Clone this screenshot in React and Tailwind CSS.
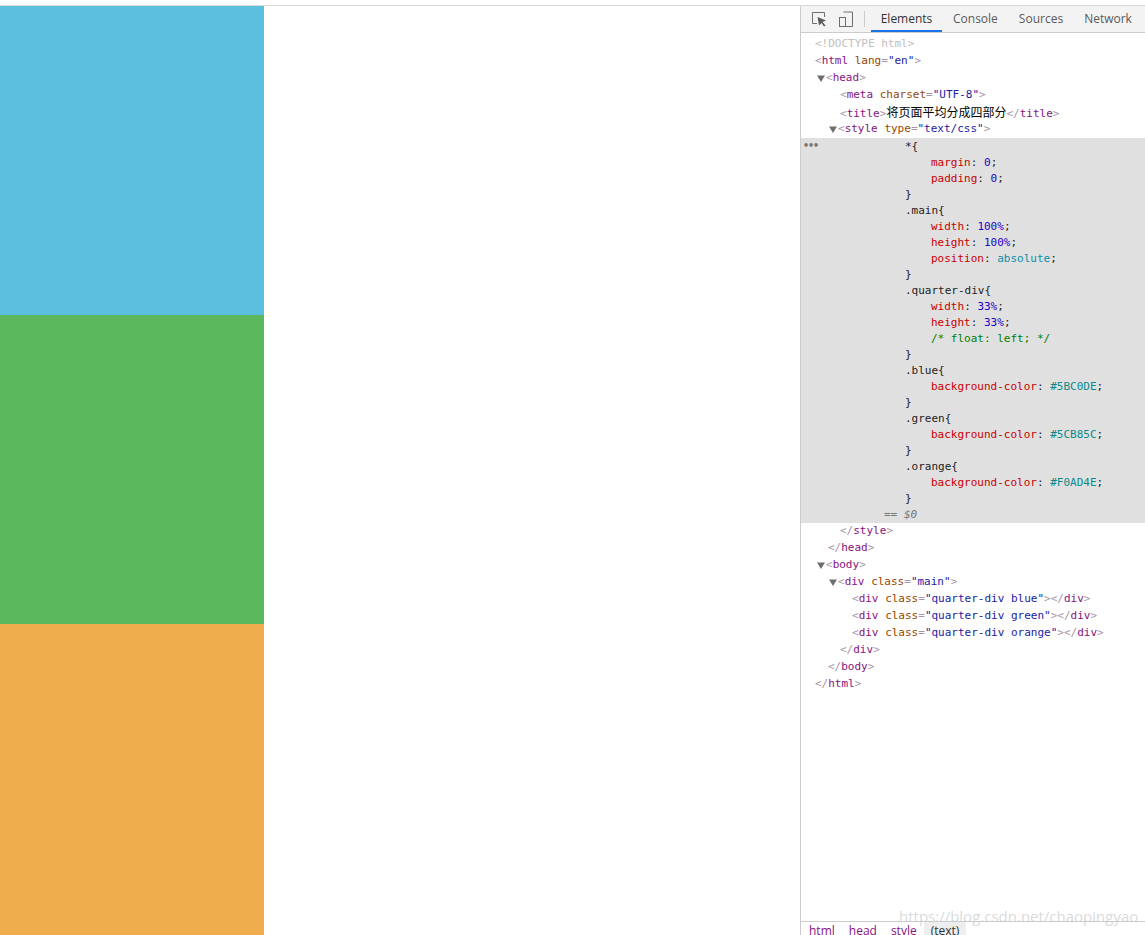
import React from 'react';

const TAG = 'text-[#881280]';
const BR = 'text-[#a894a6]';
const ATTR = 'text-[#994500]';
const VAL = 'text-[#1a1aa6]';

const Tag = ({ children }) => <span className={TAG}>{children}</span>;
const Br = ({ children }) => <span className={BR}>{children}</span>;
const Attr = ({ children }) => <span className={ATTR}>{children}</span>;
const Val = ({ children }) => <span className={VAL}>{children}</span>;

const Arrow = () => (
    <svg width="8" height="7" viewBox="0 0 8 7" className="shrink-0 mr-[1px]">
        <path d="M0 0.5 H8 L4 7 Z" fill="#6e6e6e" />
    </svg>
);

const TreeRow = ({ indent, arrow, children }) => (
    <div className="flex items-center h-[17px] whitespace-pre" style={{ paddingLeft: indent }}>
        {arrow && <Arrow />}
        <span>{children}</span>
    </div>
);

const DivRow = ({ name }) => (
    <TreeRow indent={51}>
        <Br>&lt;</Br><Tag>div</Tag> <Attr>class</Attr><Br>=</Br><Val>"quarter-div {name}"</Val><Br>&gt;&lt;/</Br><Tag>div</Tag><Br>&gt;</Br>
    </TreeRow>
);

const cssLines = [
    { t: '*{', x: 104 },
    { p: 'margin', v: '0', c: 'text-[#1c00cf]' },
    { p: 'padding', v: '0', c: 'text-[#1c00cf]' },
    { t: '}', x: 104 },
    { t: '.main{', x: 104 },
    { p: 'width', v: '100%', c: 'text-[#1c00cf]' },
    { p: 'height', v: '100%', c: 'text-[#1c00cf]' },
    { p: 'position', v: 'absolute', c: 'text-[#0a8fa8]' },
    { t: '}', x: 104 },
    { t: '.quarter-div{', x: 104 },
    { p: 'width', v: '33%', c: 'text-[#1c00cf]' },
    { p: 'height', v: '33%', c: 'text-[#1c00cf]' },
    { comment: '/* float: left; */' },
    { t: '}', x: 104 },
    { t: '.blue{', x: 104 },
    { p: 'background-color', v: '#5BC0DE', c: 'text-[#0a8a8a]' },
    { t: '}', x: 104 },
    { t: '.green{', x: 104 },
    { p: 'background-color', v: '#5CB85C', c: 'text-[#0a8a8a]' },
    { t: '}', x: 104 },
    { t: '.orange{', x: 104 },
    { p: 'background-color', v: '#F0AD4E', c: 'text-[#0a8a8a]' },
    { t: '}', x: 104 },
];

const CssLine = ({ line }) => {
    if (line.t) {
        return <div className="h-4 leading-4 pl-[104px] whitespace-pre text-[#222222]">{line.t}</div>;
    }
    if (line.comment) {
        return <div className="h-4 leading-4 pl-[130px] whitespace-pre text-[#008000]">{line.comment}</div>;
    }
    return (
        <div className="h-4 leading-4 pl-[130px] whitespace-pre text-[#222222]">
            <span className="text-[#c80000]">{line.p}</span>: <span className={line.c}>{line.v}</span>;
        </div>
    );
};

const Tabs = () => (
    <div className="h-[27px] shrink-0 flex items-center bg-[#f3f3f3] border-b border-[#cccccc] text-[12px] text-[#5a5a5a] font-['Open_Sans','Noto_Sans',sans-serif]">
        <svg width="16" height="16" viewBox="0 0 16 16" className="ml-[10px] shrink-0" fill="none">
            <path d="M6 12.5 H1.5 V1.5 H13.5 V6" stroke="#6e6e6e" strokeWidth="1" />
            <path d="M6.5 6 L15 9.5 L11.5 11 L14.5 14.5 L13 15.5 L10.5 12 L8 14.5 Z" fill="#5a5a5a" />
        </svg>
        <svg width="16" height="16" viewBox="0 0 16 16" className="ml-[11px] shrink-0" fill="none">
            <path d="M5.5 1 H14.5 V15.5 H6" stroke="#6e6e6e" strokeWidth="1" />
            <rect x="1.5" y="6.5" width="6" height="9" stroke="#6e6e6e" strokeWidth="1" />
        </svg>
        <div className="w-px h-4 bg-[#cccccc] ml-[10px]" />
        <div className="ml-[6px] h-full flex items-center px-3 w-[71px] justify-center text-[#333333] border-b-2 border-[#1a73e8] pt-[1px]">Elements</div>
        <div className="h-full flex items-center ml-[11px]">Console</div>
        <div className="h-full flex items-center ml-[21px]">Sources</div>
        <div className="h-full flex items-center ml-[21px]">Network</div>
    </div>
);

const Crumbs = () => (
    <div className="h-[14px] shrink-0 flex items-start border-t border-[#cccccc] bg-white text-[12px] leading-[18px] text-[#881280] font-['Open_Sans','Noto_Sans',sans-serif] overflow-hidden">
        <span className="ml-[8px]">html</span>
        <span className="ml-[14px]">head</span>
        <span className="ml-[14px]">style</span>
        <span className="ml-[7px] px-[7px] bg-[#eeeeee] text-[#303030] h-full">(text)</span>
    </div>
);

export default function App() {
    return (
        <div className="relative h-[935px] overflow-hidden flex flex-col bg-white">
            <div className="h-[6px] shrink-0 border-b border-[#d9d9d9]" />
            <div className="flex-1 flex min-h-0">
                <div className="w-[800px] shrink-0">
                    <div className="w-[264px] h-full flex flex-col">
                        <div className="h-[309px] bg-[#5bc0de]" />
                        <div className="h-[309px] bg-[#5cb85c]" />
                        <div className="flex-1 bg-[#f0ad4e]" />
                    </div>
                </div>
                <div className="flex-1 min-w-0 flex flex-col border-l border-[#cccccc]">
                    <Tabs />
                    <div className="flex-1 min-h-0 pt-[3px] text-[11px] font-['DejaVu_Sans_Mono',monospace] overflow-hidden">
                        <TreeRow indent={14}><span className="text-[#c0c0c0]">&lt;!DOCTYPE html&gt;</span></TreeRow>
                        <TreeRow indent={14}><Br>&lt;</Br><Tag>html</Tag> <Attr>lang</Attr><Br>=</Br><Val>"en"</Val><Br>&gt;</Br></TreeRow>
                        <TreeRow indent={16} arrow><Br>&lt;</Br><Tag>head</Tag><Br>&gt;</Br></TreeRow>
                        <TreeRow indent={39}><Br>&lt;</Br><Tag>meta</Tag> <Attr>charset</Attr><Br>=</Br><Val>"UTF-8"</Val><Br>&gt;</Br></TreeRow>
                        <TreeRow indent={39}><Br>&lt;</Br><Tag>title</Tag><Br>&gt;</Br><span className="text-[12px] text-black font-['Noto_Sans_CJK_SC',sans-serif]">将页面平均分成四部分</span><Br>&lt;/</Br><Tag>title</Tag><Br>&gt;</Br></TreeRow>
                        <TreeRow indent={28} arrow><Br>&lt;</Br><Tag>style</Tag> <Attr>type</Attr><Br>=</Br><Val>"text/css"</Val><Br>&gt;</Br></TreeRow>
                        <div className="relative bg-[#e0e0e0] pt-[1px]">
                            <span className="absolute left-[2px] top-0 text-[#777777] text-[10px] leading-4 font-bold tracking-[-1px]">•••</span>
                            {cssLines.map((line, i) => <CssLine key={i} line={line} />)}
                            <div className="h-4 leading-4 pl-[83px] whitespace-pre text-[#777777]">== <span className="italic">$0</span></div>
                        </div>
                        <TreeRow indent={39}><Br>&lt;/</Br><Tag>style</Tag><Br>&gt;</Br></TreeRow>
                        <TreeRow indent={27}><Br>&lt;/</Br><Tag>head</Tag><Br>&gt;</Br></TreeRow>
                        <TreeRow indent={16} arrow><Br>&lt;</Br><Tag>body</Tag><Br>&gt;</Br></TreeRow>
                        <TreeRow indent={28} arrow><Br>&lt;</Br><Tag>div</Tag> <Attr>class</Attr><Br>=</Br><Val>"main"</Val><Br>&gt;</Br></TreeRow>
                        <DivRow name="blue" />
                        <DivRow name="green" />
                        <DivRow name="orange" />
                        <TreeRow indent={39}><Br>&lt;/</Br><Tag>div</Tag><Br>&gt;</Br></TreeRow>
                        <TreeRow indent={27}><Br>&lt;/</Br><Tag>body</Tag><Br>&gt;</Br></TreeRow>
                        <TreeRow indent={14}><Br>&lt;/</Br><Tag>html</Tag><Br>&gt;</Br></TreeRow>
                    </div>
                    <Crumbs />
                </div>
            </div>
            {/* csdn watermark over the status bar */}
            <div className="absolute left-[899px] top-[906px] text-[15px] leading-5 text-[#c9c9c9]/70 font-['Open_Sans',sans-serif] whitespace-nowrap">https://blog.csdn.net/chaopingyao</div>
        </div>
    );
}
